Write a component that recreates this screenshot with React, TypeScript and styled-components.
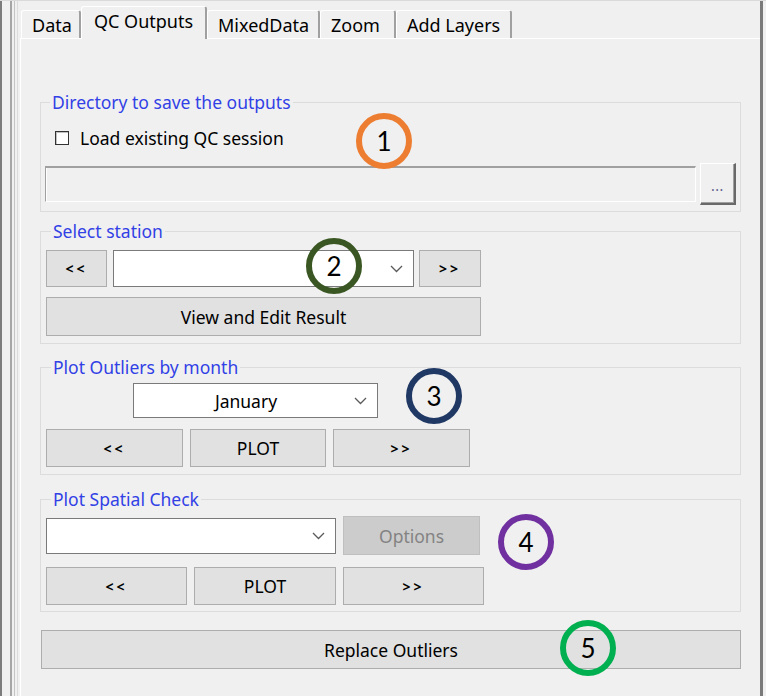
import React from "react";
import styled, { createGlobalStyle } from "styled-components";

const Global = createGlobalStyle`
  html, body { margin: 0; padding: 0; background: #f0f0f0; }
  body { font-family: "Noto Sans", "Open Sans", sans-serif; }
`;

const UI_FONT = `"Noto Sans", "Open Sans", sans-serif`;

const Window = styled.div`
  position: relative;
  width: 766px;
  height: 696px;
  overflow: hidden;
  display: flex;
  background: #f0f0f0;
  border-top: 1px solid #dadada;
  box-sizing: border-box;
`;

const LeftChrome = styled.div`
  width: 20px;
  flex: none;
  background: linear-gradient(
    to right,
    #7c7c7c 0px, #7c7c7c 2px,
    #f0f0f0 2px, #f0f0f0 10px,
    #a6a6a6 10px, #a6a6a6 12px,
    #f0f0f0 12px, #f0f0f0 14px,
    #c4c4c4 14px, #c4c4c4 15px,
    #f0f0f0 15px, #f0f0f0 17px,
    #dcdcdc 17px, #dcdcdc 18px,
    #f0f0f0 18px
  );
`;

const RightChrome = styled.div`
  width: 6px;
  flex: none;
  background: linear-gradient(
    to right,
    #7a7a7a 0px, #7a7a7a 3px,
    #f0f0f0 3px
  );
`;

const Main = styled.div`
  flex: 1;
  display: flex;
  flex-direction: column;
  min-width: 0;
`;

const TabStrip = styled.div`
  height: 37px;
  display: flex;
  align-items: flex-end;
  padding-left: 1px;
`;

const Tab = styled.div<{ $active?: boolean; $w: number }>`
  box-sizing: border-box;
  width: ${(p) => p.$w}px;
  height: ${(p) => (p.$active ? 33 : 28)}px;
  padding: ${(p) => (p.$active ? "0 0 4px 12px" : "0 0 0 10px")};
  display: flex;
  align-items: center;
  border-top: 1px solid #ffffff;
  border-left: 1px solid #ffffff;
  border-right: 2px solid #a0a0a0;
  border-radius: 3px 3px 0 0;
  background: #f0f0f0;
  font-family: ${UI_FONT};
  font-size: 18px;
  color: #000;
  white-space: nowrap;
  margin-bottom: ${(p) => (p.$active ? "-1px" : "0")};
  position: relative;
  z-index: ${(p) => (p.$active ? 1 : 0)};
`;

const Panel = styled.div`
  flex: 1;
  border-top: 1px solid #ffffff;
  border-left: 1px solid #ffffff;
  padding: 53px 19px 0 19px;
  display: flex;
  flex-direction: column;
`;

const Group = styled.fieldset<{ $mt?: number; $pt: number; $pb: number; $pl?: number }>`
  margin: ${(p) => p.$mt ?? 0}px 0 0 0;
  padding: ${(p) => p.$pt}px 4px ${(p) => p.$pb}px ${(p) => p.$pl ?? 5}px;
  border: 1px solid #dcdcdc;
  min-width: 0;
  display: flex;
  flex-direction: column;
`;

const Legend = styled.legend`
  margin-left: 5px;
  padding: 0 2px;
  font-family: ${UI_FONT};
  font-size: 17.5px;
  line-height: 20px;
  color: #3241e6;
`;

const CheckRow = styled.label`
  height: 24px;
  display: flex;
  align-items: center;
  gap: 11px;
  padding-left: 10px;
  font-family: ${UI_FONT};
  font-size: 17.5px;
  color: #000;
`;

const CheckBox = styled.span`
  width: 14px;
  height: 14px;
  box-sizing: border-box;
  border: 1px solid #333;
  background: #fff;
  box-shadow: inset 1px 1px 0 #c0c0c0;
`;

const Row = styled.div<{ $mt?: number; $gap: number; $h: number; $ml?: number }>`
  display: flex;
  align-items: center;
  gap: ${(p) => p.$gap}px;
  height: ${(p) => p.$h}px;
  margin-top: ${(p) => p.$mt ?? 0}px;
  margin-left: ${(p) => p.$ml ?? 0}px;
`;

const PathField = styled.div`
  flex: 1;
  height: 36px;
  box-sizing: border-box;
  border-style: solid;
  border-width: 2px 1px 1px 1px;
  border-color: #a0a0a0 #ffffff #ffffff #a0a0a0;
  background: #f0f0f0;
  box-shadow: inset 1px 0 0 #ffffff;
`;

const BrowseButton = styled.div`
  width: 36px;
  height: 42px;
  box-sizing: border-box;
  border-style: solid;
  border-width: 1px 2px 2px 1px;
  border-color: #ffffff #696969 #696969 #ffffff;
  background: #f0f0f0;
  box-shadow: inset -1px -1px 0 #a0a0a0;
  display: flex;
  align-items: flex-end;
  justify-content: center;
  padding-bottom: 10px;
  font-family: ${UI_FONT};
  font-size: 14px;
  line-height: 14px;
  color: #5a5a8a;
  letter-spacing: 0.5px;
`;

const Button = styled.div<{ $w: number; $h: number; $disabled?: boolean; $small?: boolean }>`
  width: ${(p) => p.$w}px;
  height: ${(p) => p.$h}px;
  flex: none;
  box-sizing: border-box;
  border: 1px solid ${(p) => (p.$disabled ? "#bfbfbf" : "#adadad")};
  background: ${(p) => (p.$disabled ? "#cccccc" : "#e1e1e1")};
  color: ${(p) => (p.$disabled ? "#838383" : "#000")};
  display: flex;
  align-items: center;
  justify-content: center;
  font-family: ${UI_FONT};
  font-size: ${(p) => (p.$small ? 14 : 17.5)}px;
  font-weight: ${(p) => (p.$small ? 700 : 400)};
  letter-spacing: ${(p) => (p.$small ? "3px" : "0")};
`;

const Combo = styled.div<{ $w: number; $h: number }>`
  width: ${(p) => p.$w}px;
  height: ${(p) => p.$h}px;
  flex: none;
  box-sizing: border-box;
  border: 1px solid #7a7a7a;
  background: #fff;
  display: flex;
  align-items: center;
  padding: 0 10px 0 4px;
  font-family: ${UI_FONT};
  font-size: 17.5px;
  color: #000;
`;

const ComboText = styled.span`
  flex: 1;
  text-align: center;
`;

const WideButton = styled(Button)`
  margin-left: 1px;
`;

const Marker = styled.div<{ $color: string }>`
  position: absolute;
  width: 44px;
  height: 44px;
  border: 6px solid ${(p) => p.$color};
  border-radius: 50%;
  display: flex;
  align-items: center;
  justify-content: center;
  font-family: Lato, "Open Sans", sans-serif;
  font-size: 26px;
  color: #000;
  z-index: 5;
`;

const Chevron = () => (
  <svg width="13" height="8" viewBox="0 0 13 8" style={{ flex: "none" }}>
    <polyline points="1,1 6.5,6.5 12,1" fill="none" stroke="#5a5a5a" strokeWidth="1.3" />
  </svg>
);

const tabs = [
  { label: "Data", w: 60 },
  { label: "QC Outputs", w: 126, active: true },
  { label: "MixedData", w: 113 },
  { label: "Zoom", w: 76 },
  { label: "Add Layers", w: 116 },
];

const markers = [
  { n: 1, x: 356, y: 112, c: "#ed7d31" },
  { n: 2, x: 306, y: 237, c: "#3a5723" },
  { n: 3, x: 406, y: 367, c: "#1f3864" },
  { n: 4, x: 498, y: 513, c: "#7030a0" },
  { n: 5, x: 560, y: 619, c: "#00b050" },
];

export default function App() {
  return (
    <>
      <Global />
      <Window>
        <LeftChrome />
        <Main>
          <TabStrip>
            {tabs.map((t) => (
              <Tab key={t.label} $w={t.w} $active={t.active}>
                {t.label}
              </Tab>
            ))}
          </TabStrip>
          <Panel>
            <Group $pt={14} $pb={6} $pl={4}>
              <Legend>Directory to save the outputs</Legend>
              <CheckRow>
                <CheckBox />
                Load existing QC session
              </CheckRow>
              <Row $mt={13} $gap={4} $h={42}>
                <PathField />
                <BrowseButton>...</BrowseButton>
              </Row>
            </Group>

            <Group $mt={9} $pt={9} $pb={7}>
              <Legend>Select station</Legend>
              <Row $gap={6} $h={37}>
                <Button $w={61} $h={37} $small>
                  &lt;&lt;
                </Button>
                <Combo $w={301} $h={37} style={{ marginRight: -1 }}>
                  <ComboText />
                  <Chevron />
                </Combo>
                <Button $w={62} $h={37} $small>
                  &gt;&gt;
                </Button>
              </Row>
              <Row $mt={10} $gap={0} $h={39}>
                <Button $w={435} $h={39}>View and Edit Result</Button>
              </Row>
            </Group>

            <Group $mt={13} $pt={6} $pb={7}>
              <Legend>Plot Outliers by month</Legend>
              <Row $gap={0} $h={35} $ml={87}>
                <Combo $w={245} $h={35}>
                  <ComboText>January</ComboText>
                  <Chevron />
                </Combo>
              </Row>
              <Row $mt={11} $gap={7} $h={38}>
                <Button $w={137} $h={38} $small>
                  &lt;&lt;
                </Button>
                <Button $w={136} $h={38}>PLOT</Button>
                <Button $w={137} $h={38} $small>
                  &gt;&gt;
                </Button>
              </Row>
            </Group>

            <Group $mt={14} $pt={7} $pb={6}>
              <Legend>Plot Spatial Check</Legend>
              <Row $gap={7} $h={39}>
                <Combo $w={290} $h={36}>
                  <ComboText />
                  <Chevron />
                </Combo>
                <Button $w={137} $h={39} $disabled>
                  Options
                </Button>
              </Row>
              <Row $mt={12} $gap={7} $h={38}>
                <Button $w={141} $h={38} $small>
                  &lt;&lt;
                </Button>
                <Button $w={142} $h={38}>PLOT</Button>
                <Button $w={141} $h={38} $small>
                  &gt;&gt;
                </Button>
              </Row>
            </Group>

            <Row $mt={18} $gap={0} $h={39}>
              <WideButton $w={700} $h={39}>Replace Outliers</WideButton>
            </Row>
          </Panel>
        </Main>
        <RightChrome />
        {markers.map((m) => (
          <Marker key={m.n} $color={m.c} style={{ left: m.x, top: m.y }}>
            {m.n}
          </Marker>
        ))}
      </Window>
    </>
  );
}
